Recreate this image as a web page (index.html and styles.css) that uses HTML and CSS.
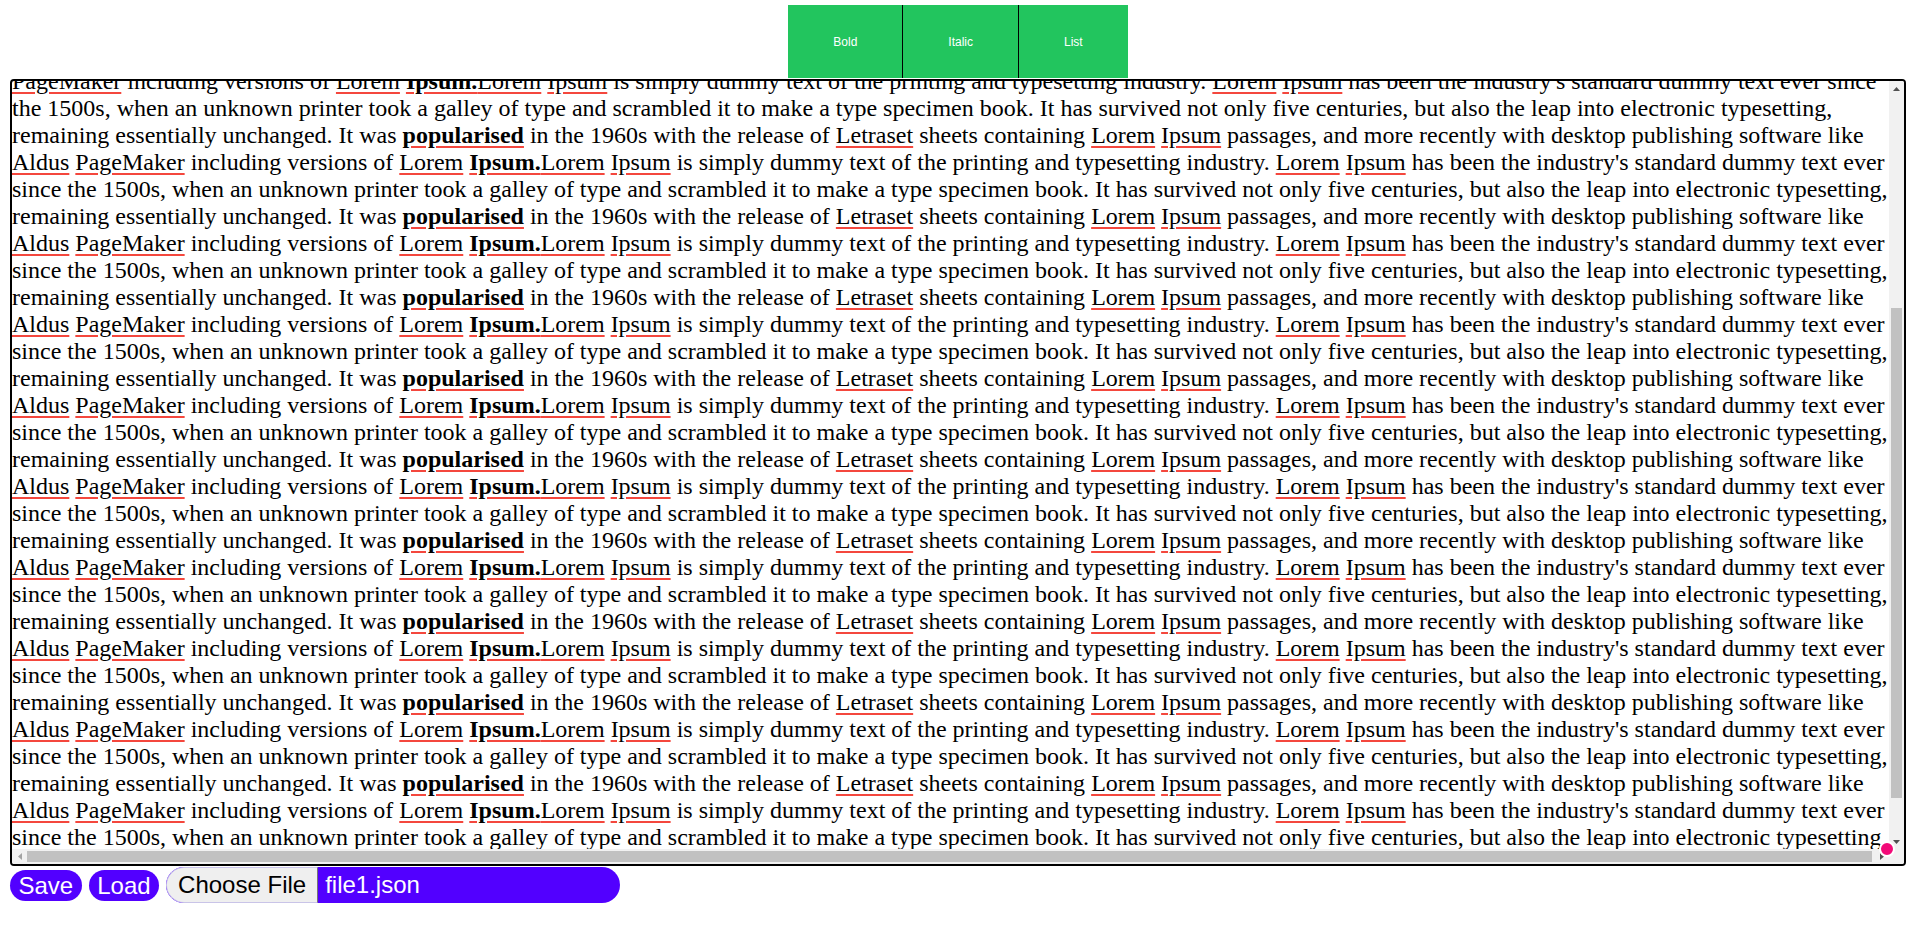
FILE: index.html
```html
<!DOCTYPE html>
<html lang="en">
<head>
<meta charset="utf-8">
<title>Editor</title>
<link rel="stylesheet" href="styles.css">
</head>
<body>
<div class="toolbar">
  <button class="tool">Bold</button><button class="tool">Italic</button><button class="tool">List</button>
</div>
<div class="editor-wrap">
  <div class="editor">
    <div class="viewport" id="viewport">
      <div class="content">since the 1500s, when an unknown printer took a galley of type and scrambled it to make a type specimen book. It has survived not only five centuries, but also the leap into electronic typesetting, remaining essentially unchanged. It was <b><u>popularised</u></b> in the 1960s with the release of <u>Letraset</u> sheets containing <u>Lorem</u> <u>Ipsum</u> passages, and more recently with desktop publishing software like <u>Aldus</u> <u>PageMaker</u> including versions of <u>Lorem</u> <b><u>Ipsum.</u></b><u>Lorem</u> <u>Ipsum</u> is simply dummy text of the printing and typesetting industry. <u>Lorem</u> <u>Ipsum</u> has been the industry's standard dummy text ever since the 1500s, when an unknown printer took a galley of type and scrambled it to make a type specimen book. It has survived not only five centuries, but also the leap into electronic typesetting, remaining essentially unchanged. It was <b><u>popularised</u></b> in the 1960s with the release of <u>Letraset</u> sheets containing <u>Lorem</u> <u>Ipsum</u> passages, and more recently with desktop publishing software like <u>Aldus</u> <u>PageMaker</u> including versions of <u>Lorem</u> <b><u>Ipsum.</u></b><u>Lorem</u> <u>Ipsum</u> is simply dummy text of the printing and typesetting industry. <u>Lorem</u> <u>Ipsum</u> has been the industry's standard dummy text ever since the 1500s, when an unknown printer took a galley of type and scrambled it to make a type specimen book. It has survived not only five centuries, but also the leap into electronic typesetting, remaining essentially unchanged. It was <b><u>popularised</u></b> in the 1960s with the release of <u>Letraset</u> sheets containing <u>Lorem</u> <u>Ipsum</u> passages, and more recently with desktop publishing software like <u>Aldus</u> <u>PageMaker</u> including versions of <u>Lorem</u> <b><u>Ipsum.</u></b><u>Lorem</u> <u>Ipsum</u> is simply dummy text of the printing and typesetting industry. <u>Lorem</u> <u>Ipsum</u> has been the industry's standard dummy text ever since the 1500s, when an unknown printer took a galley of type and scrambled it to make a type specimen book. It has survived not only five centuries, but also the leap into electronic typesetting, remaining essentially unchanged. It was <b><u>popularised</u></b> in the 1960s with the release of <u>Letraset</u> sheets containing <u>Lorem</u> <u>Ipsum</u> passages, and more recently with desktop publishing software like <u>Aldus</u><br><u>PageMaker</u> including versions of <u>Lorem</u> <b><u>Ipsum.</u></b><span class="unit"><u>Lorem</u> <u>Ipsum</u> is simply dummy text of the printing and typesetting industry. <u>Lorem</u> <u>Ipsum</u> has been the industry's standard dummy text ever since the 1500s, when an unknown printer took a galley of type and scrambled it to make a type specimen book. It has survived not only five centuries, but also the leap into electronic typesetting, remaining essentially unchanged. It was <b><u>popularised</u></b> in the 1960s with the release of <u>Letraset</u> sheets containing <u>Lorem</u> <u>Ipsum</u> passages, and more recently with desktop publishing software like <u>Aldus</u> <u>PageMaker</u> including versions of <u>Lorem</u> <b><u>Ipsum.</u></b></span><span class="unit"><u>Lorem</u> <u>Ipsum</u> is simply dummy text of the printing and typesetting industry. <u>Lorem</u> <u>Ipsum</u> has been the industry's standard dummy text ever since the 1500s, when an unknown printer took a galley of type and scrambled it to make a type specimen book. It has survived not only five centuries, but also the leap into electronic typesetting, remaining essentially unchanged. It was <b><u>popularised</u></b> in the 1960s with the release of <u>Letraset</u> sheets containing <u>Lorem</u> <u>Ipsum</u> passages, and more recently with desktop publishing software like <u>Aldus</u> <u>PageMaker</u> including versions of <u>Lorem</u> <b><u>Ipsum.</u></b></span><span class="unit"><u>Lorem</u> <u>Ipsum</u> is simply dummy text of the printing and typesetting industry. <u>Lorem</u> <u>Ipsum</u> has been the industry's standard dummy text ever since the 1500s, when an unknown printer took a galley of type and scrambled it to make a type specimen book. It has survived not only five centuries, but also the leap into electronic typesetting, remaining essentially unchanged. It was <b><u>popularised</u></b> in the 1960s with the release of <u>Letraset</u> sheets containing <u>Lorem</u> <u>Ipsum</u> passages, and more recently with desktop publishing software like <u>Aldus</u> <u>PageMaker</u> including versions of <u>Lorem</u> <b><u>Ipsum.</u></b></span><span class="unit"><u>Lorem</u> <u>Ipsum</u> is simply dummy text of the printing and typesetting industry. <u>Lorem</u> <u>Ipsum</u> has been the industry's standard dummy text ever since the 1500s, when an unknown printer took a galley of type and scrambled it to make a type specimen book. It has survived not only five centuries, but also the leap into electronic typesetting, remaining essentially unchanged. It was <b><u>popularised</u></b> in the 1960s with the release of <u>Letraset</u> sheets containing <u>Lorem</u> <u>Ipsum</u> passages, and more recently with desktop publishing software like <u>Aldus</u> <u>PageMaker</u> including versions of <u>Lorem</u> <b><u>Ipsum.</u></b></span><span class="unit"><u>Lorem</u> <u>Ipsum</u> is simply dummy text of the printing and typesetting industry. <u>Lorem</u> <u>Ipsum</u> has been the industry's standard dummy text ever since the 1500s, when an unknown printer took a galley of type and scrambled it to make a type specimen book. It has survived not only five centuries, but also the leap into electronic typesetting, remaining essentially unchanged. It was <b><u>popularised</u></b> in the 1960s with the release of <u>Letraset</u> sheets containing <u>Lorem</u> <u>Ipsum</u> passages, and more recently with desktop publishing software like <u>Aldus</u> <u>PageMaker</u> including versions of <u>Lorem</u> <b><u>Ipsum.</u></b></span><span class="unit"><u>Lorem</u> <u>Ipsum</u> is simply dummy text of the printing and typesetting industry. <u>Lorem</u> <u>Ipsum</u> has been the industry's standard dummy text ever since the 1500s, when an unknown printer took a galley of type and scrambled it to make a type specimen book. It has survived not only five centuries, but also the leap into electronic typesetting, remaining essentially unchanged. It was <b><u>popularised</u></b> in the 1960s with the release of <u>Letraset</u> sheets containing <u>Lorem</u> <u>Ipsum</u> passages, and more recently with desktop publishing software like <u>Aldus</u> <u>PageMaker</u> including versions of <u>Lorem</u> <b><u>Ipsum.</u></b></span><span class="unit"><u>Lorem</u> <u>Ipsum</u> is simply dummy text of the printing and typesetting industry. <u>Lorem</u> <u>Ipsum</u> has been the industry's standard dummy text ever since the 1500s, when an unknown printer took a galley of type and scrambled it to make a type specimen book. It has survived not only five centuries, but also the leap into electronic typesetting, remaining essentially unchanged. It was <b><u>popularised</u></b> in the 1960s with the release of <u>Letraset</u> sheets containing <u>Lorem</u> <u>Ipsum</u> passages, and more recently with desktop publishing software like <u>Aldus</u> <u>PageMaker</u> including versions of <u>Lorem</u> <b><u>Ipsum.</u></b></span><span class="unit"><u>Lorem</u> <u>Ipsum</u> is simply dummy text of the printing and typesetting industry. <u>Lorem</u> <u>Ipsum</u> has been the industry's standard dummy text ever since the 1500s, when an unknown printer took a galley of type and scrambled it to make a type specimen book. It has survived not only five centuries, but also the leap into electronic typesetting, remaining essentially unchanged. It was <b><u>popularised</u></b> in the 1960s with the release of <u>Letraset</u> sheets containing <u>Lorem</u> <u>Ipsum</u> passages, and more recently with desktop publishing software like <u>Aldus</u> <u>PageMaker</u> including versions of <u>Lorem</u> <b><u>Ipsum.</u></b></span><span class="unit"><u>Lorem</u> <u>Ipsum</u> is simply dummy text of the printing and typesetting industry. <u>Lorem</u> <u>Ipsum</u> has been the industry's standard dummy text ever since the 1500s, when an unknown printer took a galley of type and scrambled it to make a type specimen book. It has survived not only five centuries, but also the leap into electronic typesetting, remaining essentially unchanged. It was <b><u>popularised</u></b> in the 1960s with the release of <u>Letraset</u> sheets containing <u>Lorem</u> <u>Ipsum</u> passages, and more recently with desktop publishing software like <u>Aldus</u> <u>PageMaker</u> including versions of <u>Lorem</u> <b><u>Ipsum.</u></b></span><span class="unit"><u>Lorem</u> <u>Ipsum</u> is simply dummy text of the printing and typesetting industry. <u>Lorem</u> <u>Ipsum</u> has been the industry's standard dummy text ever since the 1500s, when an unknown printer took a galley of type and scrambled it to make a type specimen book. It has survived not only five centuries, but also the leap into electronic typesetting, remaining essentially unchanged. It was <b><u>popularised</u></b> in the 1960s with the release of <u>Letraset</u> sheets containing <u>Lorem</u> <u>Ipsum</u> passages, and more recently with desktop publishing software like <u>Aldus</u> <u>PageMaker</u> including versions of <u>Lorem</u> <b><u>Ipsum.</u></b></span></div>
    </div>
    <div class="vbar">
      <span class="sb-btn"><svg width="7" height="4" viewBox="0 0 7 4"><polygon points="0,4 3.5,0 7,4" fill="#505050"/></svg></span>
      <div class="vtrack"><div class="vthumb"></div></div>
      <span class="sb-btn"><svg width="7" height="4" viewBox="0 0 7 4"><polygon points="0,0 7,0 3.5,4" fill="#505050"/></svg></span>
    </div>
    <div class="hbar">
      <span class="sb-btn"><svg width="4" height="7" viewBox="0 0 4 7"><polygon points="4,0 4,7 0,3.5" fill="#a3a3a3"/></svg></span>
      <div class="htrack"><div class="hthumb"></div></div>
      <span class="sb-btn"><svg width="4" height="7" viewBox="0 0 4 7"><polygon points="0,0 4,3.5 0,7" fill="#505050"/></svg></span>
    </div>
    <div class="corner"></div>
  </div>
  <span class="cursor-dot"></span>
</div>
<div class="actions">
  <button class="pill">Save</button>
  <button class="pill">Load</button>
  <label class="file">
    <span class="file-btn">Choose File</span>
    <span class="file-name">file1.json</span>
  </label>
</div>
<script src="script.js"></script>
</body>
</html>
```

FILE: styles.css
```css
html, body {
  margin: 0;
  padding: 0;
  background: #ffffff;
}

.toolbar {
  display: flex;
  justify-content: center;
  padding-top: 5px;
}

.tool {
  height: 73px;
  padding: 0 45px;
  margin: 0;
  border: none;
  background: #22c55e;
  color: #ffffff;
  font-family: "Liberation Sans", Arial, sans-serif;
  font-size: 12px;
}

.tool + .tool {
  border-left: 1px solid #000000;
}

.editor-wrap {
  position: relative;
  margin: 1px 10px 0;
}

.editor {
  box-sizing: border-box;
  height: 787px;
  border: 2px solid #000000;
  border-radius: 4px;
  overflow: hidden;
  display: grid;
  grid-template-columns: minmax(0, 1fr) 15px;
  grid-template-rows: minmax(0, 1fr) 15px;
}

.viewport {
  overflow: hidden;
  font-family: "Liberation Serif", "Times New Roman", serif;
  font-size: 24px;
  color: #000000;
}

.editor u {
  text-decoration-line: underline;
  text-decoration-color: #f4473d;
  text-decoration-thickness: 2px;
  text-underline-offset: 3px;
}

.vbar {
  display: flex;
  flex-direction: column;
  background: #f1f1f1;
}

.hbar {
  display: flex;
  background: #f1f1f1;
}

.sb-btn {
  flex: none;
  width: 15px;
  height: 15px;
  display: flex;
  align-items: center;
  justify-content: center;
}

.vtrack {
  flex: 1;
  padding: 0 2px;
}

.vthumb {
  margin-top: 212px;
  height: 490px;
  background: #c1c1c1;
}

.htrack {
  flex: 1;
  padding: 2px 2px 2px 0;
}

.hthumb {
  height: 100%;
  background: #c1c1c1;
}

.corner {
  background: #f1f1f1;
}

.cursor-dot {
  position: absolute;
  right: 11px;
  bottom: 9px;
  width: 12px;
  height: 12px;
  border-radius: 50%;
  background: #f20a78;
  border: 2px solid #ffffff;
}

.actions {
  display: flex;
  align-items: center;
  margin-top: 1px;
  padding-left: 10px;
  gap: 7px;
  font-family: "Liberation Sans", Arial, sans-serif;
}

.pill {
  height: 31px;
  padding: 0 8.5px;
  border: none;
  border-radius: 16px;
  background: #5200ff;
  color: #ffffff;
  font-family: inherit;
  font-size: 24px;
  line-height: 31px;
}

.file {
  display: flex;
  align-items: stretch;
  box-sizing: border-box;
  width: 454px;
  height: 36px;
  border-radius: 18px;
  overflow: hidden;
  background: #5200ff;
  color: #ffffff;
  font-size: 24px;
  line-height: 28px;
}

.file-btn {
  display: flex;
  align-items: center;
  padding: 0 11px;
  background: #efefef;
  color: #000000;
  border: 1px solid #c9c4e8;
  border-right-color: #767676;
  border-radius: 18px 0 0 18px;
}

.file-name {
  display: flex;
  align-items: center;
  padding-left: 7px;
}
```

FILE: script.js
```js
document.getElementById('viewport').scrollTop = 337;
```
